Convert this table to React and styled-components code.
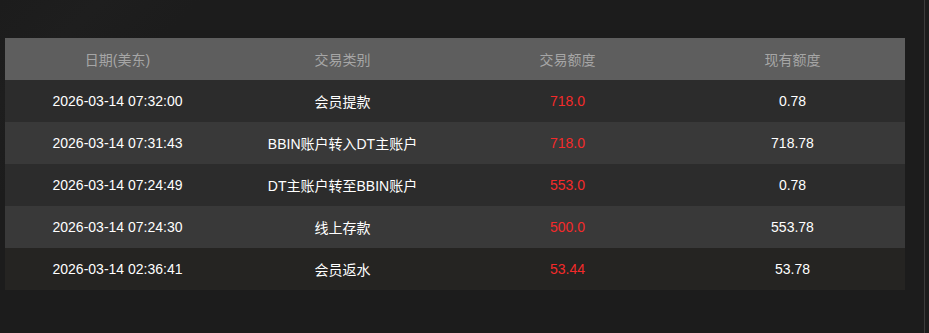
import styled, { createGlobalStyle } from "styled-components";

const GlobalStyle = createGlobalStyle`
  html, body {
    margin: 0;
    padding: 0;
    background: #1c1c1c;
  }
  body {
    font-family: "Liberation Sans", "Noto Sans CJK SC", Arial, sans-serif;
  }
`;

const Page = styled.div`
  width: 925px;
  height: 333px;
  box-sizing: border-box;
  padding: 38px 0 0 5px;
  border-right: 1px solid #3c3c3c;
  background: linear-gradient(135deg, #1c1c1c 0%, #1e1e1e 8%, #1c1c1c 16%);
`;

const Table = styled.div`
  width: 900px;
  display: flex;
  flex-direction: column;
`;

const Row = styled.div`
  display: grid;
  grid-template-columns: repeat(4, 1fr);
  height: 42px;
  align-items: center;
  background: ${(p) => p.$bg};
`;

const HeadCell = styled.div`
  text-align: center;
  font-size: 14px;
  color: #a6a6a6;
`;

const Cell = styled.div`
  text-align: center;
  font-size: 14px;
  color: ${(p) => (p.$red ? "#f42a2a" : "#ffffff")};
`;

const rows = [
  ["2026-03-14 07:32:00", "会员提款", "718.0", "0.78"],
  ["2026-03-14 07:31:43", "BBIN账户转入DT主账户", "718.0", "718.78"],
  ["2026-03-14 07:24:49", "DT主账户转至BBIN账户", "553.0", "0.78"],
  ["2026-03-14 07:24:30", "线上存款", "500.0", "553.78"],
  ["2026-03-14 02:36:41", "会员返水", "53.44", "53.78"],
];

const rowBg = ["#2c2c2c", "#393939", "#2c2c2c", "#393939", "#252422"];

const App = () => {
  return (
    <Page>
      <GlobalStyle />
      <Table>
        <Row $bg="#5e5e5e">
          <HeadCell>日期(美东)</HeadCell>
          <HeadCell>交易类别</HeadCell>
          <HeadCell>交易额度</HeadCell>
          <HeadCell>现有额度</HeadCell>
        </Row>
        {rows.map((r, i) => (
          <Row key={i} $bg={rowBg[i]}>
            <Cell>{r[0]}</Cell>
            <Cell>{r[1]}</Cell>
            <Cell $red>{r[2]}</Cell>
            <Cell>{r[3]}</Cell>
          </Row>
        ))}
      </Table>
    </Page>
  );
};

export default App;
